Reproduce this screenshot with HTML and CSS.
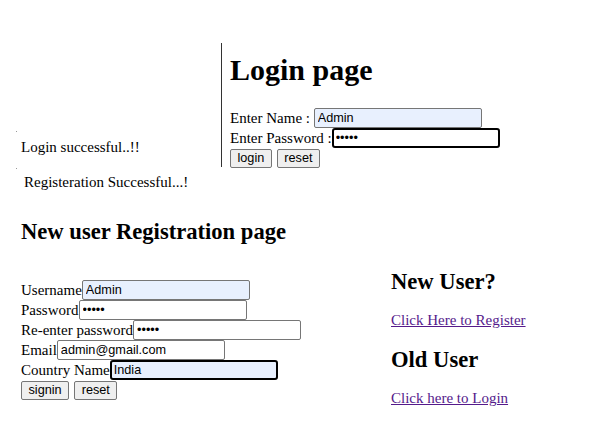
FILE: index.html
```html
<!DOCTYPE html>
<html>
<head>
<meta charset="utf-8">
<link rel="stylesheet" href="styles.css">
</head>
<body>
<div class="top">
  <div class="msgcol">
    <span class="dot"></span>
    <div class="msg">Login successful..!!</div>
  </div>
  <div class="login">
    <h1 class="h1">Login page</h1>
    <div class="row">Enter Name : <input class="inp auto" type="text" value="Admin"></div>
    <div class="row">Enter Password :<input class="inp focus" type="password" value="admin"></div>
    <div class="row btns"><button class="btn">login</button><button class="btn">reset</button></div>
  </div>
</div>
<div class="msg2"><span class="dot"></span>Registeration Successful...!</div>
<div class="bottom">
  <div class="reg">
    <h2 class="h2">New user Registration page</h2>
    <div class="row">Username<input class="inp auto" type="text" value="Admin"></div>
    <div class="row">Password<input class="inp" type="password" value="admin"></div>
    <div class="row">Re-enter password<input class="inp" type="password" value="admin"></div>
    <div class="row">Email<input class="inp" type="text" value="admin@gmail.com"></div>
    <div class="row">Country Name<input class="inp auto focus" type="text" value="India"></div>
    <div class="row btns"><button class="btn">signin</button><button class="btn">reset</button></div>
  </div>
  <div class="side">
    <h2 class="h2s">New User?</h2>
    <a class="lnk" href="#">Click Here to Register</a>
    <h2 class="h2s">Old User</h2>
    <a class="lnk" href="#">Click here to Login</a>
  </div>
</div>
</body>
</html>
```
FILE: styles.css
```css
html, body { margin: 0; padding: 0; background: #fff; }
body {
  font-family: "Liberation Serif", "Times New Roman", serif;
  font-size: 15px;
  color: #000;
  padding-left: 21px;
}
.top { display: flex; margin-top: 43px; }
.msgcol {
  width: 200px;
  display: flex;
  flex-direction: column;
  justify-content: flex-end;
  padding-bottom: 11px;
  position: relative;
}
.msg { line-height: 18px; }
.dot {
  position: absolute;
  left: -5px;
  top: 88px;
  width: 1px; height: 1px;
  background: #999;
}
.login {
  border-left: 1px solid #333;
  padding-left: 8px;
  height: 124px;
}
.h1 {
  font-size: 30px;
  font-weight: bold;
  margin: 10px 0 21px;
  line-height: 34px;
}
.row {
  height: 20px;
  line-height: 20px;
  display: flex;
  align-items: center;
  white-space: pre;
}
.btns { gap: 5px; }
.inp {
  box-sizing: border-box;
  width: 168px;
  height: 20px;
  margin: 0;
  padding: 1px 3px;
  border: 1px solid #767676;
  border-radius: 2px;
  font-family: "Liberation Sans", Arial, sans-serif;
  font-size: 12.7px;
  background: #fff;
  color: #000;
}
.auto { background: #e8f0fe; }
.focus { border: 2px solid #000; border-radius: 3px; padding: 0 2px; }
.btn {
  box-sizing: border-box;
  height: 19px;
  margin: 0;
  padding: 0 6.5px;
  border: 1px solid #767676;
  border-radius: 2px;
  background: #efefef;
  font-family: "Liberation Sans", Arial, sans-serif;
  font-size: 12.7px;
  color: #000;
}
.msg2 {
  position: relative;
  margin-top: 6px;
  padding-left: 3px;
  line-height: 18px;
}
.msg2 .dot { top: -5px; left: -5px; }
.bottom { display: flex; }
.reg { width: 370px; }
.h2 {
  font-size: 22.6px;
  font-weight: bold;
  margin: 28px 0 35px;
  line-height: 26px;
}
.side { padding-top: 78px; display: flex; flex-direction: column; align-items: flex-start; }
.h2s {
  font-size: 22.6px;
  font-weight: bold;
  margin: 0 0 16px;
  line-height: 26px;
}
.lnk { color: #551a8b; line-height: 18px; margin-bottom: 18px; }
```
